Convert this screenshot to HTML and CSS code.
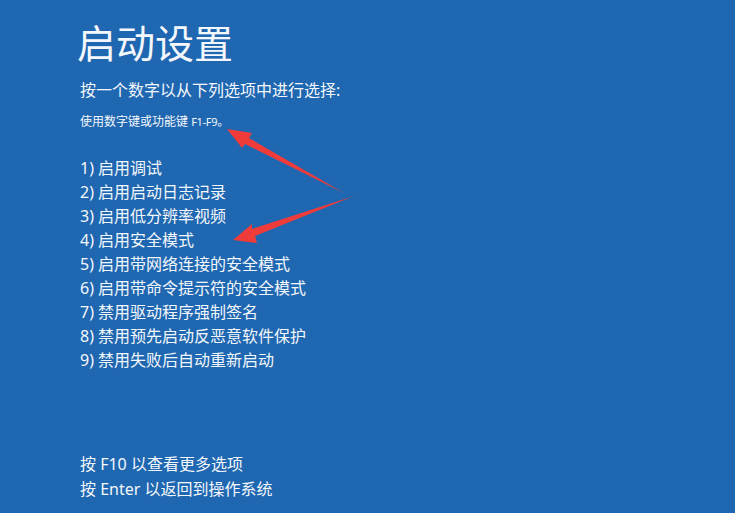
FILE: index.html
```html
<!DOCTYPE html>
<html lang="zh-CN">
<head>
<meta charset="utf-8">
<title>启动设置</title>
<link rel="stylesheet" href="styles.css">
</head>
<body>
<main class="screen">
  <h1 class="title">启动设置</h1>
  <p class="subtitle">按一个数字以从下列选项中进行选择:</p>
  <p class="hint">使用数字键或功能键 <span class="keys">F1-F9</span>。</p>
  <ol class="options">
    <li>1) 启用调试</li>
    <li>2) 启用启动日志记录</li>
    <li>3) 启用低分辨率视频</li>
    <li>4) 启用安全模式</li>
    <li>5) 启用带网络连接的安全模式</li>
    <li>6) 启用带命令提示符的安全模式</li>
    <li>7) 禁用驱动程序强制签名</li>
    <li>8) 禁用预先启动反恶意软件保护</li>
    <li>9) 禁用失败后自动重新启动</li>
  </ol>
  <div class="footer">
    <p>按 F10 以查看更多选项</p>
    <p>按 Enter 以返回到操作系统</p>
  </div>
  <svg class="arrows" width="735" height="513" viewBox="0 0 735 513" aria-hidden="true">
    <polygon points="227,129 252,133 249,138 344,193 245,144 242,148" fill="#f03b3b"/>
    <polygon points="233,240 252,224 252,229 354,196 255,236 257,243" fill="#f03b3b"/>
  </svg>
</main>
</body>
</html>
```
FILE: styles.css
```css
html, body {
  margin: 0;
  padding: 0;
  background: #1f67b1;
}

.screen {
  position: relative;
  width: 735px;
  height: 513px;
  box-sizing: border-box;
  padding: 22px 0 0 80px;
  overflow: hidden;
  color: #f4f7fb;
  font-family: "Noto Sans", "Noto Sans CJK SC", sans-serif;
}

.title {
  margin: 0 0 0 -3px;
  font-size: 39px;
  line-height: 38px;
  font-weight: 400;
  font-family: "Noto Sans CJK SC", sans-serif;
}

.subtitle {
  margin: 20px 0 0;
  font-size: 16px;
  line-height: 20px;
}

.hint {
  margin: 14px 0 0;
  font-size: 12px;
  line-height: 16px;
}

.keys {
  font-size: 11px;
  letter-spacing: -0.3px;
}

.options {
  list-style: none;
  margin: 26px 0 0;
  padding: 0;
  font-size: 16px;
  line-height: 24px;
}

.footer {
  margin-top: 80px;
  font-size: 16px;
  line-height: 25px;
}

.footer p {
  margin: 0;
}

.arrows {
  position: absolute;
  left: 0;
  top: 0;
}
```
